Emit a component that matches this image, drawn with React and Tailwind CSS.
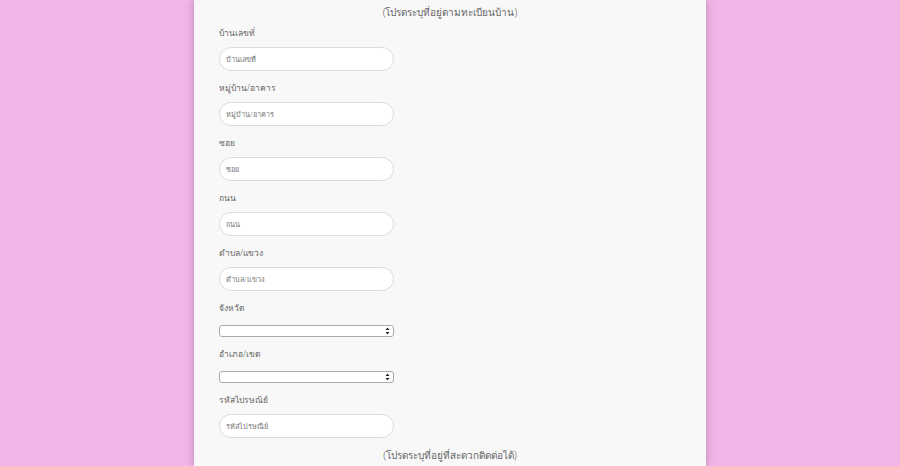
const fields = [
  { label: 'บ้านเลขที่', type: 'input' },
  { label: 'หมู่บ้าน/อาคาร', type: 'input' },
  { label: 'ซอย', type: 'input' },
  { label: 'ถนน', type: 'input' },
  { label: 'ตำบล/แขวง', type: 'input' },
  { label: 'จังหวัด', type: 'select' },
  { label: 'อำเภอ/เขต', type: 'select' },
  { label: 'รหัสไปรษณีย์', type: 'input' },
];

function SelectArrows() {
  return (
    <svg width="5" height="8" viewBox="0 0 5 8" className="absolute right-[3px] top-[1px]">
      <path d="M2.5 0.5 L4.5 3 L0.5 3 Z" fill="#222" />
      <path d="M2.5 7.5 L4.5 5 L0.5 5 Z" fill="#222" />
    </svg>
  );
}

function Field({ label, type }) {
  return (
    <div className="flex flex-col">
      <div className="h-[14px] leading-[14px] text-[8.5px] font-light text-[#666]">{label}</div>
      {type === 'input' ? (
        <input
          placeholder={label}
          className="mt-[7px] w-[175px] h-[24px] rounded-[12px] border border-[#dcdcdc] bg-white px-[6px] text-[7.3px] font-light text-[#555] placeholder:text-[#777] outline-none"
        />
      ) : (
        <div className="relative mt-[10px] w-[175px] h-[12px] rounded-[3px] border border-[#aaa] bg-white">
          <SelectArrows />
        </div>
      )}
    </div>
  );
}

export default function App() {
  return (
    <div className="min-h-screen bg-[#f1b5e8] flex justify-center font-['Noto_Sans','Liberation_Sans',sans-serif]">
      <div className="w-[512px] bg-[#f8f8f8] shadow-[0_0_8px_rgba(0,0,0,0.25)] px-[25px] pt-[4px] flex flex-col">
        <div className="h-[16px] leading-[16px] text-center text-[10px] font-light text-[#666]">(โปรดระบุที่อยู่ตามทะเบียนบ้าน)</div>
        <div className="mt-[6px] flex flex-col gap-[10px]">
          {fields.map(f => (
            <Field key={f.label} label={f.label} type={f.type} />
          ))}
        </div>
        <div className="mt-[9px] h-[16px] leading-[16px] text-center text-[10px] font-light text-[#666]">(โปรดระบุที่อยู่ที่สะดวกติดต่อได้)</div>
      </div>
    </div>
  );
}
